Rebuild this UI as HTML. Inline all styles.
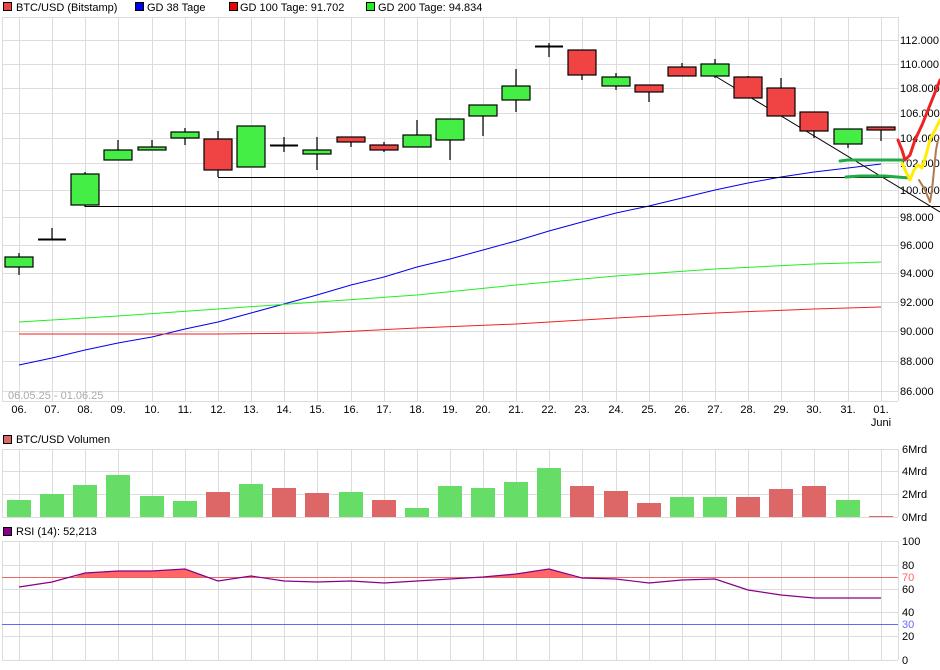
<!DOCTYPE html>
<html><head><meta charset="utf-8"><style>
html,body{margin:0;padding:0;background:#fff;}
svg{display:block;font-family:"Liberation Sans",sans-serif;}
</style></head><body>
<svg width="940" height="670" viewBox="0 0 940 670" xmlns="http://www.w3.org/2000/svg">
<rect width="940" height="670" fill="#fff"/>
<!-- legend -->
<g font-size="11" fill="#000">
<rect x="3.5" y="2.5" width="8" height="8" fill="#ee4444" stroke="#000"/><text x="16" y="11">BTC/USD (Bitstamp)</text>
<rect x="135.5" y="2.5" width="8" height="8" fill="#0000ee" stroke="#000"/><text x="147" y="11">GD 38 Tage</text>
<rect x="229.5" y="2.5" width="8" height="8" fill="#ee0000" stroke="#000"/><text x="240" y="11">GD 100 Tage: 91.702</text>
<rect x="366.5" y="2.5" width="8" height="8" fill="#22ee22" stroke="#000"/><text x="378" y="11">GD 200 Tage: 94.834</text>
</g>
<!-- grids -->
<g stroke="#dcdcdc" stroke-width="1">
<path d="M2.5 17V401M19.5 17V401M52.5 17V401M85.5 17V401M118.5 17V401M152.5 17V401M185.5 17V401M218.5 17V401M251.5 17V401M284.5 17V401M317.5 17V401M351.5 17V401M384.5 17V401M417.5 17V401M450.5 17V401M483.5 17V401M516.5 17V401M549.5 17V401M582.5 17V401M616.5 17V401M649.5 17V401M682.5 17V401M715.5 17V401M748.5 17V401M781.5 17V401M814.5 17V401M848.5 17V401M881.5 17V401M898.5 17V401"/>
<path d="M2 17.5H898M2 40.5H898M2 64.5H898M2 88.5H898M2 113.5H898M2 138.5H898M2 163.5H898M2 190.5H898M2 217.5H898M2 245.5H898M2 273.5H898M2 302.5H898M2 331.5H898M2 361.5H898M2 391.5H898M2 401.5H898"/>
<path d="M2.5 449V517M19.5 449V517M52.5 449V517M85.5 449V517M118.5 449V517M152.5 449V517M185.5 449V517M218.5 449V517M251.5 449V517M284.5 449V517M317.5 449V517M351.5 449V517M384.5 449V517M417.5 449V517M450.5 449V517M483.5 449V517M516.5 449V517M549.5 449V517M582.5 449V517M616.5 449V517M649.5 449V517M682.5 449V517M715.5 449V517M748.5 449V517M781.5 449V517M814.5 449V517M848.5 449V517M881.5 449V517M898.5 449V517"/>
<path d="M2 449.5H898M2 471.5H898M2 494.5H898M2 517.5H898"/>
<path d="M2.5 541V660M19.5 541V660M52.5 541V660M85.5 541V660M118.5 541V660M152.5 541V660M185.5 541V660M218.5 541V660M251.5 541V660M284.5 541V660M317.5 541V660M351.5 541V660M384.5 541V660M417.5 541V660M450.5 541V660M483.5 541V660M516.5 541V660M549.5 541V660M582.5 541V660M616.5 541V660M649.5 541V660M682.5 541V660M715.5 541V660M748.5 541V660M781.5 541V660M814.5 541V660M848.5 541V660M881.5 541V660M898.5 541V660"/>
<path d="M2 541.5H898M2 565.5H898M2 589.5H898M2 612.5H898M2 636.5H898M2 660.5H898"/>
</g>
<!-- price axis labels -->
<g font-size="11" fill="#000">
<text x="900" y="44">112.000</text><text x="900" y="68">110.000</text><text x="900" y="92">108.000</text><text x="900" y="117">106.000</text><text x="900" y="142">104.000</text><text x="900" y="167">102.000</text><text x="900" y="194">100.000</text><text x="900" y="221">98.000</text><text x="900" y="249">96.000</text><text x="900" y="277">94.000</text><text x="900" y="306">92.000</text><text x="900" y="335">90.000</text><text x="900" y="365">88.000</text><text x="900" y="395">86.000</text>
</g>
<text x="8" y="399" font-size="11" fill="#aaaaaa">06.05.25 - 01.06.25</text>
<g font-size="11" fill="#000" text-anchor="middle">
<text x="19" y="413">06.</text><text x="52" y="413">07.</text><text x="85" y="413">08.</text><text x="118" y="413">09.</text><text x="152" y="413">10.</text><text x="185" y="413">11.</text><text x="218" y="413">12.</text><text x="251" y="413">13.</text><text x="284" y="413">14.</text><text x="317" y="413">15.</text><text x="351" y="413">16.</text><text x="384" y="413">17.</text><text x="417" y="413">18.</text><text x="450" y="413">19.</text><text x="483" y="413">20.</text><text x="516" y="413">21.</text><text x="549" y="413">22.</text><text x="582" y="413">23.</text><text x="616" y="413">24.</text><text x="649" y="413">25.</text><text x="682" y="413">26.</text><text x="715" y="413">27.</text><text x="748" y="413">28.</text><text x="781" y="413">29.</text><text x="814" y="413">30.</text><text x="848" y="413">31.</text><text x="881" y="413">01.</text><text x="881" y="426">Juni</text>
</g>
<!-- moving averages -->
<polyline fill="none" stroke="#0000ee" stroke-width="1" points="19,365 52,358 85,350 118,343 152,337 185,329 218,322 251,313 284,304 317,295 351,285 384,277 417,267 450,259 483,250 516,241 549,231 582,222 616,213 649,206 682,198 715,190 748,183 781,177 814,172 848,168 881,164"/>
<polyline fill="none" stroke="#22ee22" stroke-width="1" points="19,322 118,316 218,309 317,302 417,295 516,285 616,276 715,269 814,264 881,262"/>
<polyline fill="none" stroke="#ee2222" stroke-width="1" points="19,334 118,334 218,334 317,333 417,328 516,324 616,318 715,313 814,309 881,307"/>
<!-- drawn lines -->
<g stroke="#000" stroke-width="1" fill="none">
<path d="M218 177.5H898"/><path d="M85 206.5H940"/><path d="M715 76L940 212"/>
</g>
<!-- candles -->
<g stroke="#000" stroke-width="1.2">
<path d="M19 253V275M52 228V240M85 172V207M118 140V160M152 140V150M185 128V145M218 131V177M251 126V167M284 137V152M317 137V170M351 137V147M384 142V152M417 120V147M450 119V160M483 105V136M516 69V112M549 43V57M582 50V80M616 73V90M649 85V102M682 63V76M715 59V78M748 76V98M781 78V116M814 112V138M848 129V148M881 127V141"/>
</g>
<g stroke="#000" stroke-width="1.2">
<rect x="5" y="257" width="28" height="10" fill="#44ee44"/>
<path d="M38 239.5H66M535 46.5H563M270 145.5H298" stroke-width="2"/>
<rect x="71" y="174" width="28" height="31" fill="#44ee44"/>
<rect x="104" y="150" width="28" height="10" fill="#44ee44"/>
<rect x="138" y="147" width="28" height="3" fill="#44ee44"/>
<rect x="171" y="132" width="28" height="6" fill="#44ee44"/>
<rect x="204" y="139" width="28" height="31" fill="#f04444"/>
<rect x="237" y="126" width="28" height="41" fill="#44ee44"/>
<rect x="303" y="150" width="28" height="4" fill="#44ee44"/>
<rect x="337" y="137" width="28" height="5" fill="#f04444"/>
<rect x="370" y="145" width="28" height="5" fill="#f04444"/>
<rect x="403" y="135" width="28" height="12" fill="#44ee44"/>
<rect x="436" y="119" width="28" height="21" fill="#44ee44"/>
<rect x="469" y="105" width="28" height="11" fill="#44ee44"/>
<rect x="502" y="86" width="28" height="14" fill="#44ee44"/>
<rect x="568" y="50" width="28" height="25" fill="#f04444"/>
<rect x="602" y="77" width="28" height="9" fill="#44ee44"/>
<rect x="635" y="85" width="28" height="7" fill="#f04444"/>
<rect x="668" y="67" width="28" height="9" fill="#f04444"/>
<rect x="701" y="64" width="28" height="12" fill="#44ee44"/>
<rect x="734" y="77" width="28" height="21" fill="#f04444"/>
<rect x="767" y="88" width="28" height="28" fill="#f04444"/>
<rect x="800" y="112" width="28" height="19" fill="#f04444"/>
<rect x="834" y="129" width="28" height="15" fill="#44ee44"/>
<rect x="867" y="127" width="28" height="3" fill="#f04444"/>
</g>
<!-- freehand -->
<g fill="none" stroke-linecap="round" stroke-linejoin="round">
<path d="M840 161L848 160H905" stroke="#22aa44" stroke-width="3"/>
<path d="M846 177L860 176L885 176L910 178" stroke="#22aa44" stroke-width="3"/>
<path d="M898 140L902 150L905 160L910 155L915 140L922 125L930 105L936 90L940 80" stroke="#ee2222" stroke-width="3"/>
<path d="M902 163L906 172L910 180L914 170L918 165L922 168L926 155L930 140L936 128L940 120" stroke="#ffee00" stroke-width="3"/>
<path d="M919 180L925 190L930 202L932 190L934 170L936 150L938 140" stroke="#b07a50" stroke-width="2"/>
</g>
<!-- volume -->
<text x="16" y="443" font-size="11">BTC/USD Volumen</text>
<rect x="3.5" y="435.5" width="8" height="8" fill="#dd6666" stroke="#000"/>
<g font-size="11"><text x="902" y="453">6Mrd</text><text x="902" y="475">4Mrd</text><text x="902" y="498">2Mrd</text><text x="902" y="521">0Mrd</text></g>
<g>
<rect x="7" y="500" width="24" height="17" fill="#66dd66"/>
<rect x="40" y="494" width="24" height="23" fill="#66dd66"/>
<rect x="73" y="485" width="24" height="32" fill="#66dd66"/>
<rect x="106" y="475" width="24" height="42" fill="#66dd66"/>
<rect x="140" y="496" width="24" height="21" fill="#66dd66"/>
<rect x="173" y="501" width="24" height="16" fill="#66dd66"/>
<rect x="206" y="492" width="24" height="25" fill="#dd6666"/>
<rect x="239" y="484" width="24" height="33" fill="#66dd66"/>
<rect x="272" y="488" width="24" height="29" fill="#dd6666"/>
<rect x="305" y="493" width="24" height="24" fill="#dd6666"/>
<rect x="339" y="492" width="24" height="25" fill="#66dd66"/>
<rect x="372" y="500" width="24" height="17" fill="#dd6666"/>
<rect x="405" y="508" width="24" height="9" fill="#66dd66"/>
<rect x="438" y="486" width="24" height="31" fill="#66dd66"/>
<rect x="471" y="488" width="24" height="29" fill="#66dd66"/>
<rect x="504" y="482" width="24" height="35" fill="#66dd66"/>
<rect x="537" y="468" width="24" height="49" fill="#66dd66"/>
<rect x="570" y="486" width="24" height="31" fill="#dd6666"/>
<rect x="604" y="491" width="24" height="26" fill="#dd6666"/>
<rect x="637" y="503" width="24" height="14" fill="#dd6666"/>
<rect x="670" y="497" width="24" height="20" fill="#66dd66"/>
<rect x="703" y="497" width="24" height="20" fill="#66dd66"/>
<rect x="736" y="497" width="24" height="20" fill="#dd6666"/>
<rect x="769" y="489" width="24" height="28" fill="#dd6666"/>
<rect x="802" y="486" width="24" height="31" fill="#dd6666"/>
<rect x="836" y="500" width="24" height="17" fill="#66dd66"/>
<rect x="869" y="516" width="24" height="1" fill="#dd6666"/>
</g>
<!-- RSI -->
<rect x="3.5" y="527.5" width="8" height="8" fill="#880088" stroke="#000"/>
<text x="16" y="535" font-size="11">RSI (14): 52,213</text>
<g font-size="11"><text x="902" y="545">100</text><text x="902" y="569">80</text><text x="902" y="581" fill="#ff6666">70</text><text x="902" y="593">60</text><text x="902" y="616">40</text><text x="902" y="628" fill="#6666ff">30</text><text x="902" y="640">20</text><text x="902" y="664">0</text></g>
<path d="M75 577L85 573L118 571L152 571L185 569L207 577ZM245 577L251 576L256 577ZM485 577L516 574L549 569L575 577Z" fill="#ff6666"/>
<path d="M2 577.5H898" stroke="#ee6666" stroke-width="1"/>
<path d="M2 624.5H898" stroke="#6666ff" stroke-width="1"/>
<polyline fill="none" stroke="#880088" stroke-width="1.2" points="19,587 52,582 85,573 118,571 152,571 185,569 218,581 251,576 284,581 317,582 351,581 384,583 417,581 450,579 483,577 516,574 549,569 582,578 616,579 649,583 682,580 715,579 748,590 781,595 814,598 848,598 881,598"/>
</svg>
</body></html>
